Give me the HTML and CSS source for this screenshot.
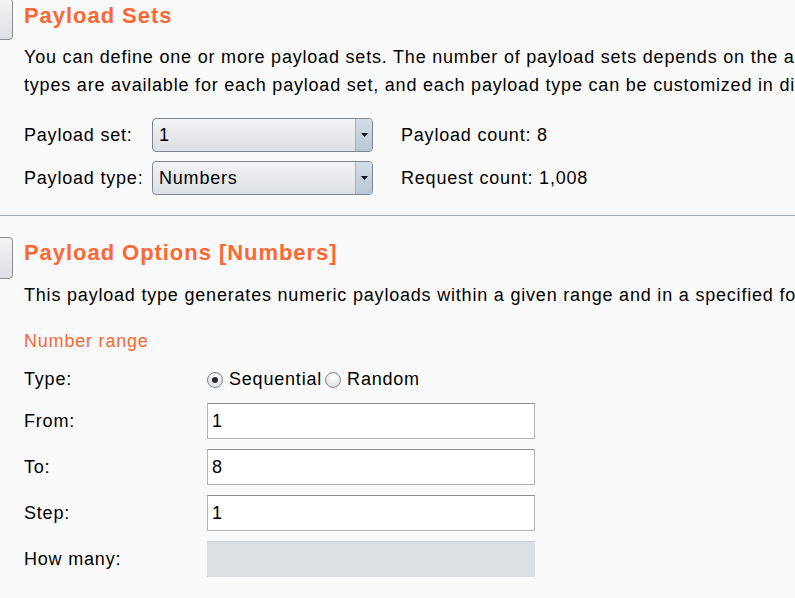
FILE: index.html
```html
<!DOCTYPE html>
<html>
<head>
<meta charset="utf-8">
<link rel="stylesheet" href="styles.css">
</head>
<body>
<div class="page">
  <section class="panel panel-first">
    <div class="toggle"></div>
    <div class="content">
      <h2 class="title">Payload Sets</h2>
      <p class="desc">You can define one or more payload sets. The number of payload sets depends on the attack type defined in the Positions tab. Various payload<br>types are available for each payload set, and each payload type can be customized in different ways.</p>
      <div class="sets">
        <span class="label">Payload set:</span>
        <div class="select"><span class="select-value">1</span><span class="select-arrow"><svg width="7" height="4" viewBox="0 0 7 4"><path d="M0 0H7L3.5 4Z" fill="#111"/></svg></span></div>
        <span class="count">Payload count: 8</span>
        <span class="label">Payload type:</span>
        <div class="select"><span class="select-value">Numbers</span><span class="select-arrow"><svg width="7" height="4" viewBox="0 0 7 4"><path d="M0 0H7L3.5 4Z" fill="#111"/></svg></span></div>
        <span class="count">Request count: 1,008</span>
      </div>
    </div>
  </section>
  <section class="panel panel-second">
    <div class="toggle"></div>
    <div class="content">
      <h2 class="title">Payload Options [Numbers]</h2>
      <p class="desc">This payload type generates numeric payloads within a given range and in a specified format.</p>
      <h3 class="subtitle">Number range</h3>
      <div class="form">
        <span class="label">Type:</span>
        <div class="radios">
          <span class="radio checked"></span><span class="radio-label">Sequential</span>
          <span class="radio"></span><span class="radio-label">Random</span>
        </div>
        <span class="label">From:</span>
        <div class="input">1</div>
        <span class="label">To:</span>
        <div class="input">8</div>
        <span class="label">Step:</span>
        <div class="input">1</div>
        <span class="label">How many:</span>
        <div class="input disabled"></div>
      </div>
    </div>
  </section>
</div>
</body>
</html>
```

FILE: styles.css
```css
html, body {
  margin: 0;
  padding: 0;
  background: #fafafa;
  overflow: hidden;
}
body {
  width: 795px;
  height: 598px;
  font-family: "Liberation Sans", Arial, sans-serif;
  font-size: 18px;
  letter-spacing: 0.8px;
  color: #000;
}
.page {
  width: 795px;
}
.panel {
  display: flex;
  align-items: flex-start;
}
.panel-first {
  border-bottom: 1px solid #a3abb4;
  padding-bottom: 20px;
}
.panel-second {
  padding-top: 21px;
}
.panel-first .toggle {
  margin-top: -2px;
}
.toggle {
  flex: none;
  width: 30px;
  height: 40px;
  margin-left: -19px;
  border: 1px solid #8a8d92;
  border-radius: 4px;
  background: linear-gradient(#f4f4f5, #dde0e5);
}
.content {
  flex: none;
  padding-left: 11px;
  padding-top: 3px;
}
.title {
  margin: 0;
  font-size: 22px;
  line-height: 26px;
  font-weight: bold;
  letter-spacing: 0.95px;
  color: #ff6633;
}
.desc {
  margin: 14px 0 0;
  line-height: 28px;
  white-space: nowrap;
}
.sets {
  display: grid;
  grid-template-columns: 128px 221px auto;
  row-gap: 9px;
  align-items: center;
  margin-top: 19px;
}
.select {
  display: flex;
  height: 32px;
  border: 1px solid #80868f;
  border-radius: 4px;
  background: linear-gradient(#f3f4f6, #e6e8ec 55%, #dcdfe4);
  overflow: hidden;
}
.select-value {
  flex: 1;
  padding-left: 6px;
  line-height: 32px;
}
.select-arrow {
  width: 16px;
  border-left: 1px solid #a2b0c0;
  background: linear-gradient(#d4dde7, #b9c7d6);
  display: flex;
  align-items: center;
  justify-content: center;
}
.count {
  white-space: nowrap;
  padding-left: 28px;
}
.panel-second .content {
  padding-top: 3px;
}
.panel-second .desc {
  margin-top: 15px;
}
.subtitle {
  margin: 18px 0 0;
  font-size: 18px;
  line-height: 28px;
  font-weight: normal;
  color: #ff6633;
}
.form {
  display: grid;
  grid-template-columns: 183px 328px;
  row-gap: 10px;
  align-items: center;
  margin-top: 10px;
}
.radios {
  display: flex;
  align-items: center;
  height: 28px;
}
.radio {
  width: 14px;
  height: 14px;
  border: 1px solid #7f848b;
  border-radius: 50%;
  background: radial-gradient(circle at 50% 35%, #ffffff, #d5d8dd);
  position: relative;
  margin-right: 6px;
  margin-top: 2px;
}
.radio.checked::after {
  content: "";
  position: absolute;
  left: 4px;
  top: 4px;
  width: 6px;
  height: 6px;
  border-radius: 50%;
  background: #2b2b2b;
}
.radio-label {
  margin-right: 3px;
}
.input {
  box-sizing: border-box;
  height: 36px;
  border: 1px solid #b3b3b3;
  border-top-color: #8e8e8e;
  background: #fff;
  padding-left: 4px;
  line-height: 34px;
}
.input.disabled {
  background: #dcdfe3;
  border: none;
  border-top: 1px solid #cbcdd2;
}
```
